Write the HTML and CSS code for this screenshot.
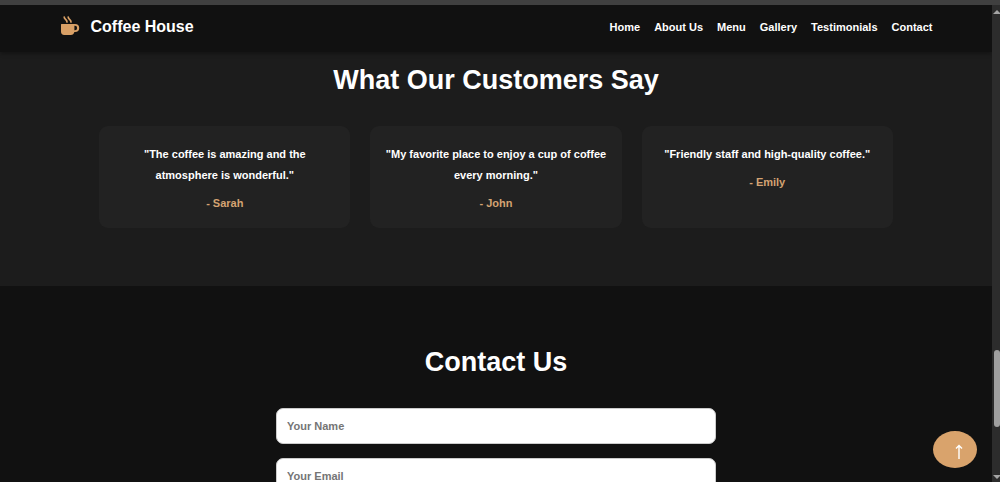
FILE: index.html
```html
<!DOCTYPE html>
<html lang="en">
<head>
<meta charset="utf-8">
<title>Coffee House</title>
<link rel="stylesheet" href="styles.css">
</head>
<body>
<div class="window">
  <div class="page">
    <header class="header">
      <a class="brand" href="#home">
        <svg class="brand-icon" viewBox="0 0 20 20" aria-hidden="true">
          <path d="M1 8.5Q1 8 1.5 8H15A4 3.8 0 0 1 15 16H14.4Q13.6 19 10.8 19H4.2Q1 19 1 15.6ZM14.4 9.8V14.2H15A2 2.1 0 0 0 15 9.8Z" fill="#d9a066" fill-rule="evenodd"/>
          <path d="M4.2 1C4.2 3.4 7 3.2 7 6M8.2 1C8.2 3.4 11 3.2 11 6" fill="none" stroke="#d9a066" stroke-width="1.7" stroke-linecap="round"/>
        </svg>
        <span>Coffee House</span>
      </a>
      <nav class="nav">
        <a href="#home">Home</a>
        <a href="#about">About Us</a>
        <a href="#menu">Menu</a>
        <a href="#gallery">Gallery</a>
        <a href="#testimonials">Testimonials</a>
        <a href="#contact">Contact</a>
      </nav>
    </header>
    <main>
      <section class="testimonials" id="testimonials">
        <h2 class="title">What Our Customers Say</h2>
        <div class="cards">
          <article class="card">
            <p class="quote">"The coffee is amazing and the atmosphere is wonderful."</p>
            <p class="author">- Sarah</p>
          </article>
          <article class="card">
            <p class="quote">"My favorite place to enjoy a cup of coffee every morning."</p>
            <p class="author">- John</p>
          </article>
          <article class="card">
            <p class="quote">"Friendly staff and high-quality coffee."</p>
            <p class="author">- Emily</p>
          </article>
        </div>
      </section>
      <section class="contact" id="contact">
        <h2 class="title">Contact Us</h2>
        <form class="form">
          <input class="field" type="text" placeholder="Your Name" aria-label="Your Name">
          <input class="field" type="email" placeholder="Your Email" aria-label="Your Email">
        </form>
      </section>
    </main>
  </div>
  <div class="scrollbar" aria-hidden="true">
    <svg class="scroll-arrow" viewBox="0 0 8 4"><path d="M1 4L5 0L8 3V4Z" fill="#a5a5a5"/></svg>
    <div class="track"><div class="thumb"></div></div>
    <svg class="scroll-arrow" viewBox="0 0 8 4"><path d="M1 0H8V1L5 4Z" fill="#a5a5a5"/></svg>
  </div>
</div>
<button class="to-top" type="button" aria-label="Back to top">
  <svg viewBox="0 0 10 16" aria-hidden="true"><path d="M5 15V1.5M2 4.5L5 1.5L8 4.5" fill="none" stroke="#fff" stroke-width="1.4"/></svg>
</button>
</body>
</html>
```
FILE: styles.css
```css
* {
  box-sizing: border-box;
}

body {
  margin: 0;
  background: #111;
  color: #fff;
  font-family: "Liberation Sans", Arial, sans-serif;
  font-size: 11px;
  font-weight: bold;
}

a {
  color: inherit;
  text-decoration: none;
}

.window {
  display: flex;
  height: 100vh;
  border-top: 5px solid #404040;
  overflow: hidden;
}

.page {
  flex: 1;
  overflow: hidden;
}

.header {
  position: relative;
  display: flex;
  align-items: center;
  justify-content: space-between;
  padding: 12px 6% 15px;
  background: #111;
  box-shadow: 0 2px 4px rgba(0, 0, 0, 0.3);
}

.brand {
  display: flex;
  align-items: center;
  gap: 11px;
  font-size: 16px;
  line-height: 20px;
}

.brand-icon {
  width: 20px;
  height: 20px;
  margin-top: -2px;
}

.nav {
  display: flex;
  gap: 14px;
  line-height: 20px;
}

.testimonials {
  padding: 10px 10% 58px;
  background: #1c1c1c;
}

.title {
  margin: 0 0 28px;
  font-size: 27px;
  line-height: 36px;
  text-align: center;
}

.cards {
  display: grid;
  grid-template-columns: repeat(3, 1fr);
  gap: 20px;
}

.card {
  padding: 18px 15px 14px;
  border-radius: 9px;
  background: #222;
  line-height: 21px;
  text-align: center;
}

.quote {
  margin: 0 0 7px;
}

.author {
  margin: 0;
  color: #d4a373;
}

.contact {
  padding: 58px 10%;
}

.form {
  display: flex;
  flex-direction: column;
  gap: 14px;
  max-width: 440px;
  margin: 0 auto;
}

.field {
  width: 100%;
  height: 36px;
  padding: 0 10px;
  border: 1px solid #ccc;
  border-radius: 7px;
  background: #fff;
  font: inherit;
}

.field::placeholder {
  color: #757575;
}

.scrollbar {
  display: flex;
  flex-direction: column;
  width: 8px;
  padding: 5px 0 3px;
  background: #2c2c2c;
}

.scroll-arrow {
  width: 8px;
  height: 4px;
}

.track {
  flex: 1;
  padding: 336px 0 0 2px;
}

.thumb {
  height: 77px;
  border-radius: 3px;
  background: #9f9f9f;
}

.to-top {
  position: fixed;
  right: 23px;
  bottom: 14px;
  display: flex;
  align-items: center;
  justify-content: center;
  width: 44px;
  height: 37px;
  padding: 4px 0 0 8px;
  border: 0;
  border-radius: 50%;
  background: #d9a36c;
}

.to-top svg {
  width: 10px;
  height: 16px;
}
```
